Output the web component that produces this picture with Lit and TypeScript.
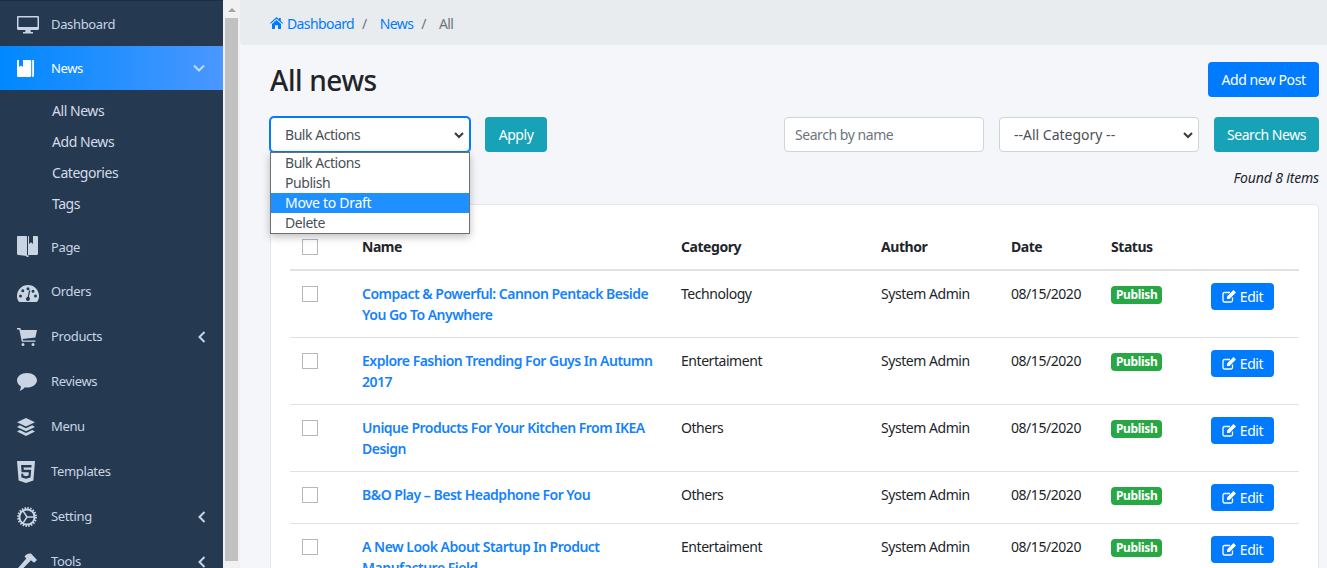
import { LitElement, html, css, svg } from "lit";
import { customElement } from "lit/decorators.js";

const icons: Record<string, unknown> = {
  desktop: html`<svg width="22" height="18" viewBox="0 0 22 18"><path fill="currentColor" fill-rule="evenodd" d="M1.2 0h19.6C21.5 0 22 .5 22 1.2v11.6c0 .7-.5 1.2-1.2 1.2H13.5l.3 2H16v1.5H6V16h2.2l.3-2H1.2C.5 14 0 13.500 0 12.800V1.200C0 .5.500 0 1.200 0zM1.500 1.500v9.500h19V1.500z"/></svg>`,
  book: html`<svg width="17" height="17" viewBox="0 0 17 17"><path fill="#fff" d="M1.200 0H13c.7 0 1.200.5 1.200 1.200v14.600c0 .7-.5 1.200-1.200 1.200H1.200C.5 17 0 16.500 0 15.800V1.200C0 .5.500 0 1.200 0z"/><path fill="#fff" d="M15.200 0h.6c.7 0 1.200.5 1.200 1.200v14.600c0 .7-.5 1.200-1.200 1.200h-.6z"/><path fill="#0a84ff" d="M2 0h4v7L4 5.500 2 7z"/></svg>`,
  page: html`<svg width="21" height="22" viewBox="0 0 21 22"><path fill="currentColor" fill-rule="evenodd" d="M1 0h8c.6 0 1 .4 1 1v19L1.500 19C.6 19 0 18.400 0 17.500V1C0 .4.400 0 1 0zM12 0v8l2-1.800L16 8V0h3.800c.7 0 1.200.5 1.200 1.200v16.300c0 .9-.6 1.500-1.500 1.500H11.500v2h-2v-1L11 19V1c0-.6.400-1 1-1z"/></svg>`,
  gauge: html`<svg class="gauge" width="22" height="17" viewBox="0 0 22 17"><path fill="currentColor" fill-rule="evenodd" d="M11 0c6 0 11 4.800 11 11 0 2-.5 3.800-1.500 5.300-.2.400-.6.700-1.100.7H2.600c-.5 0-.9-.3-1.100-.7C.5 14.800 0 13 0 11 0 4.800 5 0 11 0zM11 2.200a1.500 1.500 0 1 0 0 3 1.500 1.500 0 0 0 0-3zM5.800 4.300a1.500 1.500 0 1 0 0 3 1.500 1.500 0 0 0 0-3zM16 4.800a1.500 1.500 0 1 0 0 3 1.500 1.500 0 0 0 0-3zM3.500 9.500a1.500 1.500 0 1 0 0 3 1.500 1.500 0 0 0 0-3zM18.500 9.500a1.500 1.500 0 1 0 0 3 1.500 1.500 0 0 0 0-3zM13.300 5.500l-1.400 6.200c.6.500 1 1.100 1 1.900a2 2 0 1 1-3.800-.3c.3-.7.900-1.200 1.600-1.500l1.400-6.500z"/></svg>`,
  cart: html`<svg width="20" height="18" viewBox="0 0 20 18"><path fill="currentColor" fill-rule="evenodd" d="M0 0h3.400l.5 2H20l-1.600 7.600L5.700 11l.3 1.400h12.400v1.300H4.800L2.300 1.400H0zM6 15a1.500 1.500 0 1 1 0 3 1.500 1.500 0 0 1 0-3zM16 15a1.500 1.500 0 1 1 0 3 1.500 1.500 0 0 1 0-3z"/></svg>`,
  comment: html`<svg width="20" height="18" viewBox="0 0 20 18"><path fill="currentColor" d="M10 0c5.500 0 10 3.200 10 7.200s-4.500 7.300-10 7.300c-.8 0-1.500-.1-2.200-.2C6.500 15.800 4.800 17.500 2.500 18c.8-1.200 1.300-2.500 1.400-4.700C1.500 12 0 9.700 0 7.200 0 3.200 4.500 0 10 0z"/></svg>`,
  layers: html`<svg width="18" height="18" viewBox="0 0 18 18"><path fill="currentColor" d="M9 0l9 4.300-9 4.300-9-4.300zM2.800 7.300L9 10.300l6.200-3L18 8.900l-9 4.300-9-4.300zM2.800 11.900L9 14.900l6.200-3L18 13.600 9 18l-9-4.400z"/></svg>`,
  html5: html`<svg width="18" height="22" viewBox="0 0 18 22"><path fill="currentColor" fill-rule="evenodd" d="M0 0h18l-1.600 19.500L9 22l-7.400-2.500zM4 4l.6 7.300h7.200l-.2 3.200-2.600.8-2.600-.8-.1-1.800H4.200l.3 3.800L9 17.800l4.500-1.300.7-7.700H6.800l-.2-2.300h7.800l.2-2.500z"/></svg>`,
  cog: html`<svg width="20" height="20" viewBox="0 0 20 20"><g fill="none" stroke="currentColor"><circle cx="10" cy="10" r="7.600" stroke-width="2"/><circle cx="10" cy="10" r="9" stroke-width="2" stroke-dasharray="1.500 1.330"/><path stroke-width="1.500" d="M10 10H17.500M10 10L6 3.800M10 10L6 16.200"/></g></svg>`,
  hammer: html`<svg width="20" height="18" viewBox="0 0 20 18"><path fill="currentColor" d="M0 16.200L9.300 5.500 7.500 3.500C9.500.8 12.500-.2 14.500 1l5.500 6-3 2.800-3-2.500-1.400 1.500-9.600 9.700z"/></svg>`,
};

const chevron = (dir: string) =>
  svg`<svg class="chev" width="12" height="12" viewBox="0 0 12 12"><path fill="none" stroke="currentColor" stroke-width="2" d="${dir === "down" ? "M1 3.500L6 8.500L11 3.500" : "M8.500 1L3.500 6L8.500 11"}"/></svg>`;

const menu = [
  { icon: "desktop", label: "Dashboard" },
  { icon: "book", label: "News", active: true },
  { icon: "page", label: "Page", short: true },
  { icon: "gauge", label: "Orders" },
  { icon: "cart", label: "Products", sub: true },
  { icon: "comment", label: "Reviews" },
  { icon: "layers", label: "Menu" },
  { icon: "html5", label: "Templates" },
  { icon: "cog", label: "Setting", sub: true },
  { icon: "hammer", label: "Tools", sub: true },
];

const rows = [
  ["Compact & Powerful: Cannon Pentack Beside You Go To Anywhere", "Technology"],
  ["Explore Fashion Trending For Guys In Autumn 2017", "Entertaiment"],
  ["Unique Products For Your Kitchen From IKEA Design", "Others"],
  ["B&O Play – Best Headphone For You", "Others"],
  ["A New Look About Startup In Product Manufacture Field", "Entertaiment"],
];

@customElement("app-root")
export class AppRoot extends LitElement {
  static styles = css`
    :host {
      display: flex;
      height: 568px;
      overflow: hidden;
      font-family: "Noto Sans", "Open Sans", sans-serif;
      font-size: 14px;
      line-height: 21px;
      letter-spacing: -0.45px;
      color: #212529;
      background: #f4f6f9;
    }
    a {
      color: #007bff;
      text-decoration: none;
    }
    .sidebar {
      width: 223px;
      flex: none;
      background: #253951;
      border-top: 1px solid #1c2d42;
      color: #c9d5e3;
    }
    .item {
      display: flex;
      align-items: center;
      box-sizing: border-box;
      height: 45px;
      padding: 2px 0 0 17px;
      font-size: 13px;
      letter-spacing: -0.35px;
    }
    .item.active {
      height: 44px;
      padding-top: 0;
      color: #fff;
      background: linear-gradient(to right, #0088ff, #4a97ff);
    }
    .item.short {
      height: 44px;
    }
    .ico {
      width: 34px;
      flex: none;
      display: flex;
      align-items: center;
    }
    .ico svg {
      display: block;
    }
    .ico .gauge {
      margin-top: 4px;
    }
    .item .name {
      flex: 1;
    }
    .chev {
      margin-right: 15px;
    }
    .down {
      margin-right: 18px;
      display: flex;
      color: #c4d9f8;
    }
    .down .chev {
      margin-right: 0;
    }
    .sub {
      padding: 5px 0 5px 52px;
      color: #d3dce8;
    }
    .sub div {
      height: 31px;
      line-height: 31px;
    }
    .track {
      width: 17px;
      flex: none;
      background: #f1f1f1;
      display: flex;
      flex-direction: column;
      align-items: center;
      padding-top: 8px;
      box-sizing: border-box;
    }
    .arrow {
      width: 0;
      height: 0;
      border: 4px solid transparent;
      border-top: 0;
      border-bottom: 4px solid #a3a3a3;
    }
    .thumb {
      width: 13px;
      height: 543px;
      margin-top: 6px;
      background: #c1c1c1;
    }
    .main {
      flex: 1;
      min-width: 0;
    }
    .crumbs {
      height: 45px;
      background: #e9ecef;
      border-bottom-left-radius: 4px;
      padding: 1px 0 0 30px;
      display: flex;
      align-items: center;
      box-sizing: border-box;
      color: #6c757d;
      letter-spacing: -0.6px;
    }
    .crumbs svg {
      margin-right: 4px;
    }
    .crumbs .sep {
      margin: 0 13px 0 8px;
    }
    .content {
      padding: 17px 8px 0 30px;
    }
    .head,
    .filters {
      display: flex;
      align-items: center;
      justify-content: space-between;
    }
    h1 {
      margin: 0;
      box-sizing: border-box;
      height: 35px;
      padding-top: 1px;
      font-size: 28px;
      line-height: 35px;
      font-weight: 500;
      letter-spacing: -0.4px;
    }
    .btn {
      height: 35px;
      box-sizing: border-box;
      border-radius: 4px;
      color: #fff;
      display: flex;
      align-items: center;
      justify-content: center;
    }
    .blue {
      background: #007bff;
    }
    .teal {
      background: #17a2b8;
    }
    .add {
      width: 111px;
    }
    .apply {
      width: 62px;
      margin-left: 15px;
    }
    .go {
      width: 105px;
      margin-left: 15px;
    }
    .filters {
      margin-top: 20px;
    }
    .group {
      display: flex;
      position: relative;
    }
    .sel {
      position: relative;
      width: 200px;
      height: 35px;
      box-sizing: border-box;
      display: flex;
      align-items: center;
      padding-left: 14px;
      background: #fff;
      border: 1px solid #ced4da;
      border-radius: 4px;
      color: #495057;
    }
    .sel.cat {
      margin-left: 15px;
      letter-spacing: 0;
    }
    .sel.focus {
      border-color: #007bff;
      box-shadow: 0 0 0 1px #007bff;
    }
    .sel svg {
      position: absolute;
      right: 5px;
      top: 50%;
      margin-top: -5px;
    }
    .search {
      width: 200px;
      height: 35px;
      box-sizing: border-box;
      display: flex;
      align-items: center;
      padding-left: 10px;
      background: #fff;
      border: 1px solid #ced4da;
      border-radius: 4px;
      color: #6c757d;
    }
    .dropdown {
      position: absolute;
      left: 0;
      top: 35px;
      width: 200px;
      box-sizing: border-box;
      background: #fff;
      border: 1px solid #6f6f6f;
      box-shadow: 0 3px 8px rgba(0, 0, 0, 0.25);
      color: #495057;
      z-index: 2;
    }
    .dropdown div {
      height: 20px;
      line-height: 20px;
      padding-left: 14px;
    }
    .dropdown .hl {
      background: #1e90ff;
      color: #fff;
      letter-spacing: -0.3px;
    }
    .found {
      margin-top: 15px;
      text-align: right;
      font-style: italic;
      letter-spacing: -0.15px;
    }
    .card {
      margin-top: 16px;
      background: #fff;
      border: 1px solid #e4e6ea;
      border-radius: 4px;
      padding: 19px 19px 0;
    }
    table {
      width: 1009px;
      table-layout: fixed;
      border-collapse: separate;
      border-spacing: 0;
    }
    .c1 {
      width: 60px;
    }
    .c2 {
      width: 319px;
    }
    .c3 {
      width: 200px;
    }
    .c4 {
      width: 130px;
    }
    .c5 {
      width: 100px;
    }
    th,
    td {
      padding: 12px;
      text-align: left;
      vertical-align: top;
      border-bottom: 1px solid #dee2e6;
    }
    th {
      border-bottom: 2px solid #dee2e6;
      font-weight: 700;
    }
    .name-link {
      font-weight: 600;
      letter-spacing: -0.5px;
      color: #1482ff;
    }
    .box {
      width: 14px;
      height: 14px;
      margin-top: 3px;
      border: 1px solid #b4b8bc;
      background: #fff;
    }
    .badge {
      display: inline-block;
      vertical-align: top;
      margin-top: 3px;
      height: 18px;
      line-height: 18px;
      padding: 0 5px;
      border-radius: 4px;
      background: #28a745;
      color: #fff;
      font-size: 12px;
      font-weight: 700;
      letter-spacing: -0.35px;
    }
    .edit {
      width: 63px;
      height: 27px;
      gap: 4px;
    }
  `;

  render() {
    return html`
      <nav class="sidebar">
        ${menu.map(
          (m) => html`
            <div class="item ${m.active ? "active" : ""} ${m.short ? "short" : ""}">
              <span class="ico">${icons[m.icon]}</span>
              <span class="name">${m.label}</span>
              ${m.active ? html`<span class="down">${chevron("down")}</span>` : ""}
              ${m.sub ? chevron("left") : ""}
            </div>
            ${m.active
              ? html`<div class="sub">
                  <div>All News</div>
                  <div>Add News</div>
                  <div>Categories</div>
                  <div>Tags</div>
                </div>`
              : ""}
          `
        )}
      </nav>
      <div class="track"><div class="arrow"></div><div class="thumb"></div></div>
      <main class="main">
        <div class="crumbs">
          <svg width="13" height="12" viewBox="0 0 13 12"><path fill="#007bff" d="M6.500 0l2.500 2.300V1h1.800v3l2.200 2-.7.800-5.800-5-5.800 5L0 6zM6.500 3l4.500 3.900V12H8V8.300H5V12H2V6.900z"/></svg>
          <a>Dashboard</a><span class="sep">/</span><a>News</a><span class="sep">/</span><span>All</span>
        </div>
        <div class="content">
          <div class="head">
            <h1>All news</h1>
            <a class="btn blue add">Add new Post</a>
          </div>
          <div class="filters">
            <div class="group">
              <div class="sel focus">Bulk Actions ${this.caret()}</div>
              <a class="btn teal apply">Apply</a>
              <div class="dropdown">
                <div>Bulk Actions</div>
                <div>Publish</div>
                <div class="hl">Move to Draft</div>
                <div>Delete</div>
              </div>
            </div>
            <div class="group">
              <div class="search">Search by name</div>
              <div class="sel cat">--All Category -- ${this.caret()}</div>
              <a class="btn teal go">Search News</a>
            </div>
          </div>
          <div class="found">Found 8 items</div>
          <div class="card">
            <table>
              <colgroup>
                <col class="c1" /><col class="c2" /><col class="c3" /><col class="c4" /><col class="c5" /><col class="c5" /><col class="c5" />
              </colgroup>
              <thead>
                <tr>
                  <th><div class="box"></div></th>
                  <th>Name</th>
                  <th>Category</th>
                  <th>Author</th>
                  <th>Date</th>
                  <th>Status</th>
                  <th></th>
                </tr>
              </thead>
              <tbody>
                ${rows.map(
                  ([title, cat]) => html`
                    <tr>
                      <td><div class="box"></div></td>
                      <td><a class="name-link">${title}</a></td>
                      <td>${cat}</td>
                      <td>System Admin</td>
                      <td>08/15/2020</td>
                      <td><span class="badge">Publish</span></td>
                      <td>
                        <a class="btn blue edit">
                          <svg width="14" height="13" viewBox="0 0 14 13"><path fill="none" stroke="#fff" stroke-width="1.300" d="M10.500 7.500V10.500c0 .9-.6 1.500-1.500 1.500H2.500C1.600 12 1 11.400 1 10.500V4c0-.9.600-1.500 1.500-1.500H8"/><path fill="#fff" d="M11.500 0L14 2.500 7.500 9H5V6.500z"/></svg>
                          Edit
                        </a>
                      </td>
                    </tr>
                  `
                )}
              </tbody>
            </table>
          </div>
        </div>
      </main>
    `;
  }

  caret() {
    return html`<svg width="10" height="10" viewBox="0 0 10 10"><path fill="none" stroke="#3a3a3a" stroke-width="2" d="M1 3L5 7L9 3"/></svg>`;
  }
}
